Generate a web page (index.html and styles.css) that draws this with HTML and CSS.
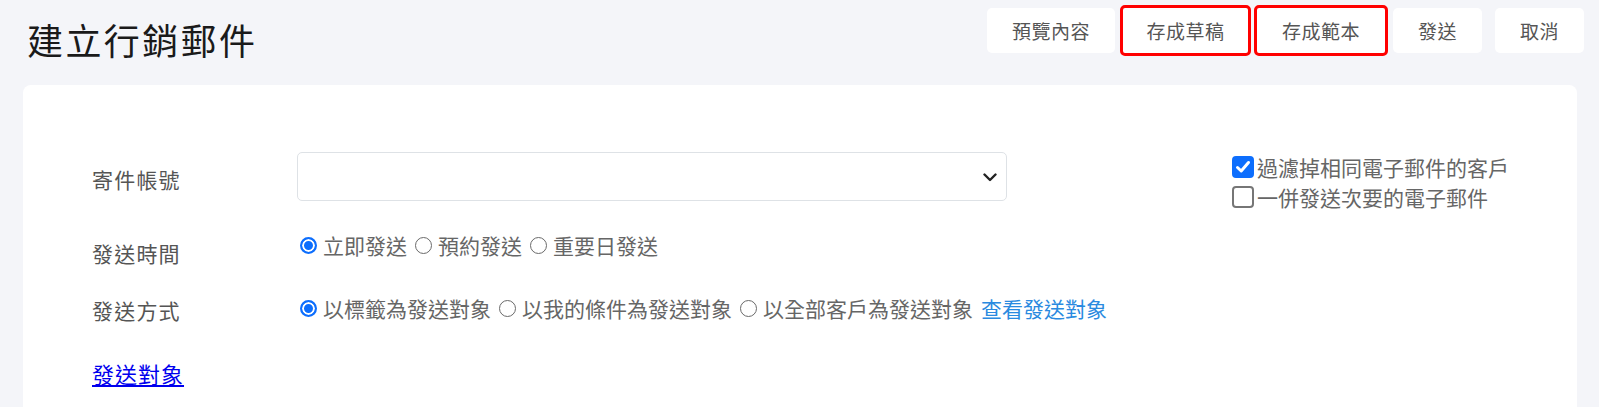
FILE: index.html
```html
<!DOCTYPE html>
<html lang="zh-Hant">
<head>
<meta charset="utf-8">
<title>建立行銷郵件</title>
<link rel="stylesheet" href="styles.css">
</head>
<body>
<header class="topbar">
  <h1 class="title">建立行銷郵件</h1>
  <div class="actions">
    <button class="btn">預覽內容</button>
    <button class="btn btn-marked btn-draft">存成草稿</button>
    <button class="btn btn-marked btn-tpl">存成範本</button>
    <button class="btn">發送</button>
    <button class="btn btn-cancel">取消</button>
  </div>
</header>
<main class="card">
  <div class="row row-account">
    <div class="label label-account">寄件帳號</div>
    <div class="select">
      <svg class="chevron" width="14" height="10" viewBox="0 0 14 10"><path d="M1.5 2.5 7 8l5.5-5.5" fill="none" stroke="#222" stroke-width="2.4" stroke-linecap="round" stroke-linejoin="round"/></svg>
    </div>
    <div class="options">
      <label class="check"><span class="box box-on"><svg width="18" height="18" viewBox="0 0 18 18"><path d="M3.5 9.5 7.2 13 14.5 4.5" fill="none" stroke="#fff" stroke-width="3" stroke-linecap="round" stroke-linejoin="round"/></svg></span>過濾掉相同電子郵件的客戶</label>
      <label class="check"><span class="box"></span>一併發送次要的電子郵件</label>
    </div>
  </div>
  <div class="row row-time">
    <div class="label label-time">發送時間</div>
    <div class="radios">
      <label class="radio"><span class="dot dot-on"></span>立即發送</label>
      <label class="radio"><span class="dot"></span>預約發送</label>
      <label class="radio"><span class="dot"></span>重要日發送</label>
    </div>
  </div>
  <div class="row row-mode">
    <div class="label label-mode">發送方式</div>
    <div class="radios">
      <label class="radio"><span class="dot dot-on"></span>以標籤為發送對象</label>
      <label class="radio"><span class="dot"></span>以我的條件為發送對象</label>
      <label class="radio"><span class="dot"></span>以全部客戶為發送對象</label>
      <a class="view-link" href="#">查看發送對象</a>
    </div>
  </div>
  <div class="row row-target">
    <a class="target-link" href="#">發送對象</a>
  </div>
</main>
</body>
</html>
```
FILE: styles.css
```css
html, body {
  margin: 0;
  padding: 0;
}
body {
  background: #f4f5f9;
  font-family: "Noto Sans CJK TC", "Noto Sans", sans-serif;
  color: #555;
  overflow: hidden;
}
.topbar {
  display: flex;
  justify-content: space-between;
  align-items: flex-start;
  height: 85px;
  box-sizing: border-box;
  padding: 8px 15px 0 27px;
}
.title {
  margin: 13px 0 0;
  font-size: 36px;
  line-height: 36px;
  font-weight: 400;
  letter-spacing: 2.4px;
  color: #1a1a1a;
}
.actions {
  display: flex;
  gap: 8px;
}
.btn {
  height: 45px;
  padding: 0 25px;
  background: #fff;
  border: 0;
  border-radius: 5px;
  font-family: "Noto Sans CJK TC", "Noto Sans", sans-serif;
  font-size: 19px;
  letter-spacing: 0.5px;
  color: #555;
}
.btn-marked {
  outline: 3px solid #ff0000;
  outline-offset: 0;
  border-radius: 2px;
}
.btn-draft {
  padding: 0 23.5px;
}
.btn-tpl {
  margin-left: 1px;
}
.btn-cancel {
  margin-left: 5px;
}
.card {
  display: block;
  margin: 0 22px 0 23px;
  background: #fff;
  border-radius: 8px 8px 0 0;
  padding: 67px 0 60px 69px;
  min-height: 300px;
}
.row {
  display: flex;
  align-items: flex-start;
}
.row-account {
  height: 49px;
}
.label {
  width: 205px;
  flex: none;
  font-size: 21px;
  line-height: 30px;
  letter-spacing: 1.2px;
  color: #555;
}
.label-account {
  margin-top: 12px;
}
.select {
  flex: none;
  width: 710px;
  height: 49px;
  box-sizing: border-box;
  border: 1px solid #dee2e6;
  border-radius: 5px;
  display: flex;
  align-items: center;
  justify-content: flex-end;
  padding-right: 9px;
}
.options {
  flex: none;
  margin-left: 225px;
  margin-top: 0;
  display: flex;
  flex-direction: column;
}
.check {
  display: flex;
  align-items: center;
  gap: 3px;
  height: 30px;
  font-size: 21px;
  color: #666;
}
.box {
  flex: none;
  width: 22px;
  height: 22px;
  box-sizing: border-box;
  border: 2px solid #767676;
  border-radius: 4px;
  display: flex;
  align-items: center;
  justify-content: center;
  background: #fff;
}
.box-on {
  background: #0d6efd;
  border-color: #0d6efd;
}
.row-time {
  margin-top: 29px;
}
.label-time {
  margin-top: 8px;
}
.row-mode {
  margin-top: 25px;
}
.label-mode {
  margin-top: 2px;
}
.radios {
  display: flex;
  align-items: center;
  gap: 8px;
  height: 30px;
  margin-left: 3px;
}
.radio {
  display: flex;
  align-items: center;
  gap: 6px;
  font-size: 21px;
  line-height: 30px;
  color: #666;
}
.dot {
  flex: none;
  width: 17px;
  height: 17px;
  box-sizing: border-box;
  border-radius: 50%;
  border: 1.5px solid #6a6a6a;
  background: #fff;
}
.dot-on {
  border: 2px solid #0d6efd;
  background: #0d6efd;
  box-shadow: inset 0 0 0 2px #fff;
}
.view-link {
  font-size: 21px;
  line-height: 30px;
  color: #2a8ae0;
  text-decoration: none;
}
.row-target {
  margin-top: 33px;
}
.target-link {
  font-size: 22px;
  line-height: 30px;
  letter-spacing: 1px;
  color: #0000ee;
  text-decoration: underline;
}
```
